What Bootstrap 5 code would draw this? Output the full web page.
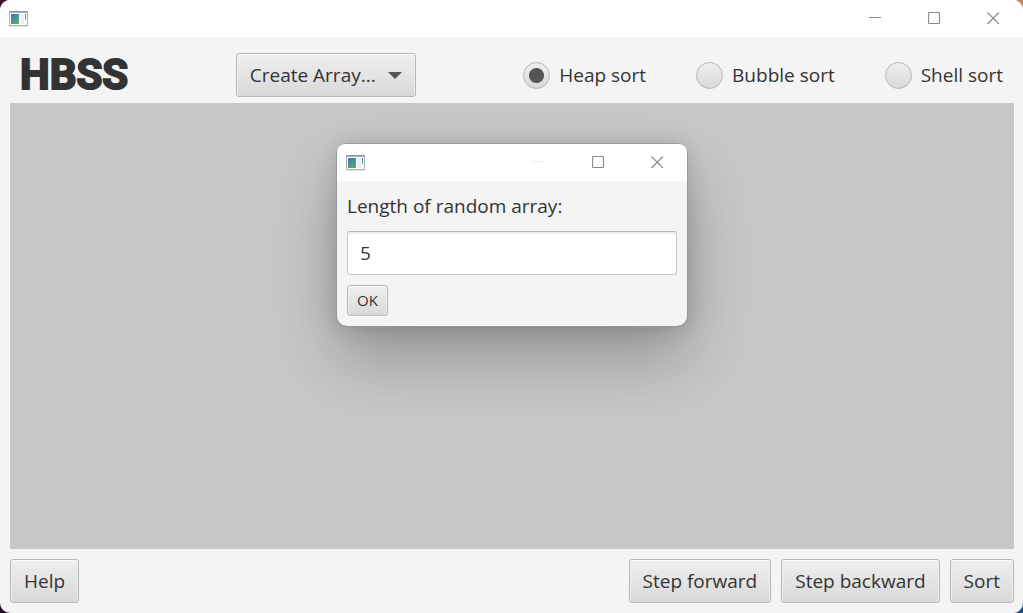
<!DOCTYPE html>
<html lang="en">
<head>
<meta charset="utf-8">
<meta name="viewport" content="width=device-width, initial-scale=1">
<title>HBSS</title>
<link href="https://cdn.jsdelivr.net/npm/bootstrap@5.3.0/dist/css/bootstrap.min.css" rel="stylesheet">
<style>
  body {
    font-family: "Open Sans", "Noto Sans", sans-serif;
    font-size: 19px;
    line-height: 30px;
    color: #333;
    background: conic-gradient(#c8806a 25%, #20508a 0 50%, #1c1020 0 75%, #401030 0);
  }
  .app-window { background: #f4f4f4; border-radius: 10px; }
  .title-strip { background: #fff; height: 37px; padding-left: 9px; }
  .win-btn { width: 59px; height: 37px; color: #8c8c8c; }
  .win-btn:disabled { color: #e6e6e6; }
  .tool-strip { padding: 16px 20px 6px; }
  .brand-name {
    font: bold 42px/44px Roboto, "Liberation Sans", sans-serif;
    color: #333;
    -webkit-text-stroke: 2px #333;
  }
  .fx-btn {
    font-size: 19px;
    line-height: 30px;
    padding: 6px 13px;
    color: #333;
    border: 1px solid #b5b5b5;
    border-radius: 3px;
    background: linear-gradient(#efefef, #d9d9d9);
    box-shadow: inset 0 1px #fbfbfb, inset 1px 0 #f0f0f0, inset -1px 0 #f0f0f0, 0 1px #fafafa;
  }
  .fx-btn-menu { gap: 12px; }
  .fx-btn-sm { font-size: 15px; line-height: 21px; padding: 4px 9px; }
  .sort-options { gap: 50px; }
  .sort-option { gap: 9px; }
  .form-check-input.fx-radio {
    width: 27px;
    height: 27px;
    border: 1px solid #b5b5b5;
    background: linear-gradient(#efefef, #d9d9d9);
  }
  .form-check-input.fx-radio:checked {
    background: radial-gradient(circle, #555 7px, transparent 8px), linear-gradient(#efefef, #d9d9d9);
  }
  .array-view { background: #c7c7c7; margin: 0 9px 0 10px; padding-top: 41px; }
  .dialog-window {
    width: 350px;
    border-radius: 10px;
    background: #f4f4f4;
    box-shadow: 0 0 0 1px #999, 0 32px 64px rgba(0,0,0,.26), 0 2px 21px rgba(0,0,0,.16);
  }
  .dialog-content { padding: 10px; gap: 10px; }
  .fx-field {
    font-size: 19px;
    line-height: 30px;
    padding: 6px 12px;
    color: #333;
    border: 1px solid #c8c8c8;
    border-top-color: #b5b5b5;
    border-radius: 3px;
    box-shadow: inset 0 3px 2px -1px #eee;
  }
  .action-strip { padding: 10px 9px 10px 10px; gap: 10px; }
</style>
</head>
<body>
<svg class="position-absolute" width="0" height="0" aria-hidden="true">
  <defs>
    <linearGradient id="pane" x1="0" y1="0" x2="0.6" y2="1"><stop offset="0" stop-color="#3d76a0"/><stop offset="1" stop-color="#55a884"/></linearGradient>
    <linearGradient id="bar" x1="0" y1="0" x2="0" y2="1"><stop offset="0" stop-color="#4a74b8"/><stop offset="1" stop-color="#62b870"/></linearGradient>
  </defs>
  <symbol id="app-icon" viewBox="0 0 20 16">
    <path fill="#adb0b7" d="M0 0h19v15H0z"/>
    <path fill="#9097a2" d="M0 0h19v1H0z"/>
    <path fill="#fff" d="M1 2h17v12H1z"/>
    <path fill="url(#pane)" d="M2 3h8v10H2z"/>
    <path fill="#edf0f1" d="M11 3h4v10h-4z"/>
    <path fill="url(#bar)" d="M16 3h1v6h-1z"/>
    <path fill="#e8eaec" d="M0 15h19v1H0z"/>
  </symbol>
  <symbol id="win-min" viewBox="0 0 13 13"><path d="M0 5.5h12" fill="none" stroke="currentColor"/></symbol>
  <symbol id="win-max" viewBox="0 0 13 13"><rect x=".5" y=".5" width="11" height="11" rx="1" fill="none" stroke="currentColor" stroke-width="1.2"/></symbol>
  <symbol id="win-close" viewBox="0 0 13 13"><path d="M.5.5l11.500 11.500m0-11.500l-11.500 11.500" fill="none" stroke="currentColor" stroke-width="1.2"/></symbol>
</svg>

<div class="app-window min-vh-100 d-flex flex-column overflow-hidden">
  <header class="title-strip d-flex align-items-center">
    <svg class="me-auto" width="20" height="16" aria-hidden="true"><use href="#app-icon"/></svg>
    <button type="button" class="win-btn btn p-0 border-0 d-flex align-items-center justify-content-center" aria-label="Minimize"><svg width="13" height="13"><use href="#win-min"/></svg></button>
    <button type="button" class="win-btn btn p-0 border-0 d-flex align-items-center justify-content-center" aria-label="Maximize"><svg width="13" height="13"><use href="#win-max"/></svg></button>
    <button type="button" class="win-btn btn p-0 border-0 d-flex align-items-center justify-content-center" aria-label="Close"><svg width="13" height="13"><use href="#win-close"/></svg></button>
  </header>

  <div class="tool-strip d-flex align-items-center justify-content-between">
    <h1 class="brand-name m-0">HBSS</h1>
    <button type="button" class="btn fx-btn fx-btn-menu d-flex align-items-center" aria-haspopup="true">
      Create Array...
      <svg width="14" height="7" viewBox="0 0 14 7" aria-hidden="true"><path d="M0 0h14L7 7z" fill="#555"/></svg>
    </button>
    <div class="sort-options d-flex" role="radiogroup" aria-label="Algorithm">
      <div class="sort-option d-flex align-items-center">
        <input class="form-check-input fx-radio m-0" type="radio" name="algorithm" id="heap" checked>
        <label for="heap">Heap sort</label>
      </div>
      <div class="sort-option d-flex align-items-center">
        <input class="form-check-input fx-radio m-0" type="radio" name="algorithm" id="bubble">
        <label for="bubble">Bubble sort</label>
      </div>
      <div class="sort-option d-flex align-items-center">
        <input class="form-check-input fx-radio m-0" type="radio" name="algorithm" id="shell">
        <label for="shell">Shell sort</label>
      </div>
    </div>
  </div>

  <main class="array-view flex-grow-1 d-flex justify-content-center align-items-start">
    <form class="dialog-window" role="dialog" aria-label="Random array">
      <div class="title-strip d-flex align-items-center rounded-top-3">
        <svg class="me-auto" width="20" height="16" aria-hidden="true"><use href="#app-icon"/></svg>
        <button type="button" disabled class="win-btn btn p-0 border-0 d-flex align-items-center justify-content-center" aria-label="Minimize"><svg width="13" height="13"><use href="#win-min"/></svg></button>
        <button type="button" class="win-btn btn p-0 border-0 d-flex align-items-center justify-content-center" aria-label="Maximize"><svg width="13" height="13"><use href="#win-max"/></svg></button>
        <button type="button" class="win-btn btn p-0 border-0 d-flex align-items-center justify-content-center" aria-label="Close"><svg width="13" height="13"><use href="#win-close"/></svg></button>
      </div>
      <div class="dialog-content d-flex flex-column align-items-start">
        <label for="length">Length of random array:</label>
        <input class="form-control fx-field" type="text" id="length" value="5">
        <button type="button" class="btn fx-btn fx-btn-sm">OK</button>
      </div>
    </form>
  </main>

  <footer class="action-strip d-flex">
    <button type="button" class="btn fx-btn me-auto">Help</button>
    <button type="button" class="btn fx-btn">Step forward</button>
    <button type="button" class="btn fx-btn">Step backward</button>
    <button type="button" class="btn fx-btn">Sort</button>
  </footer>
</div>
<script src="https://cdn.jsdelivr.net/npm/bootstrap@5.3.0/dist/js/bootstrap.bundle.min.js"></script>
</body>
</html>
